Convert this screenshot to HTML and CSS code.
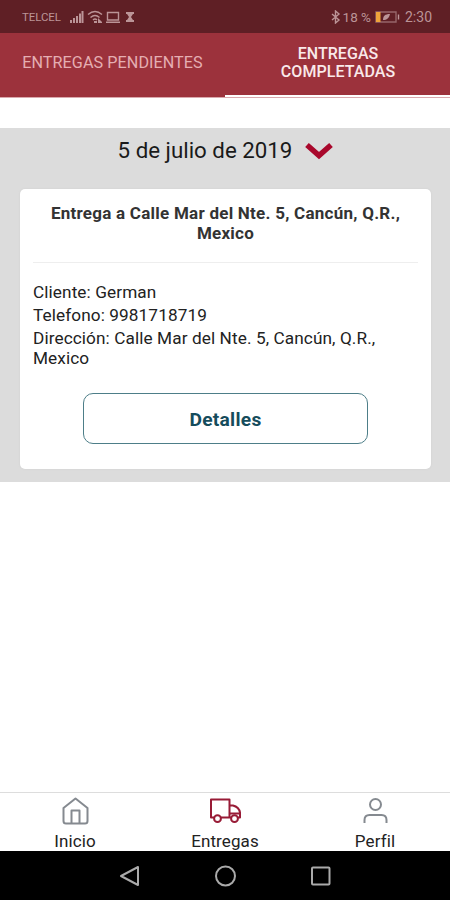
FILE: index.html
```html
<!DOCTYPE html>
<html lang="es">
<head>
<meta charset="utf-8">
<title>Entregas</title>
<link rel="stylesheet" href="styles.css">
</head>
<body>
<div class="app">
  <header class="status">
    <span class="carrier">TELCEL</span>
    <svg class="status-left" width="68" height="16" viewBox="0 0 68 16">
      <path class="fill" d="M1 11h2v3H1zM4 9h2v5H4zM7 7h2v7H7zM10 4.500h2V14h-2zM12.500 2h2v12h-2z"/>
      <path class="line" d="M19 5.500q7-6 14 0M21.500 8.500q4.500-4 9 0M24 11q2-2 4 0"/>
      <path class="fill" d="M25 12h3v2h-3zM29 9l4 4h-4zM29 14h4v-1h-4z"/>
      <path class="line" d="M38.500 3.500h11v7.500h-11zM37 13.300h14"/>
      <path class="fill" d="M57 3h8v2h-1l-2 3 2 3h1v2h-8v-2h1l2-3-2-3h-1z"/>
    </svg>
    <span class="spacer"></span>
    <svg class="bluetooth" width="10" height="14" viewBox="0 0 10 14"><path class="line" d="M1 4l7 6-3.500 3V1L8 4l-7 6"/></svg>
    <span class="percent">18 %</span>
    <svg class="battery" width="26" height="12" viewBox="0 0 26 12">
      <path class="frame" d="M1 1h20v10H1z"/>
      <path class="line" d="M23.500 3.500v5"/>
      <path class="charge" d="M1 1h4.500v10H1z"/>
      <path class="fill" d="M8 9c0-4 2-6 7-6-1 4-3 6-7 6z"/>
    </svg>
    <span class="clock">2:30</span>
  </header>
  <nav class="tabs">
    <div class="tab">ENTREGAS PENDIENTES</div>
    <div class="tab active">ENTREGAS<br>COMPLETADAS</div>
  </nav>
  <main class="content">
    <section class="day">
      <div class="date"><span>5 de julio de 2019</span>
        <svg width="28" height="18" viewBox="0 0 28 18"><path class="chevron" d="M2 3L14 13.500L26 3"/></svg>
      </div>
      <article class="card">
        <h2>Entrega a Calle Mar del Nte. 5, Cancún, Q.R.,<br>Mexico</h2>
        <div class="details">
          <p>Cliente: German</p>
          <p>Telefono: 9981718719</p>
          <p>Dirección: Calle Mar del Nte. 5, Cancún, Q.R.,<br>Mexico</p>
        </div>
        <button class="button">Detalles</button>
      </article>
    </section>
  </main>
  <nav class="bottom">
    <div class="item">
      <svg width="32" height="32" viewBox="0 0 32 32"><path d="M4.500 13L16.500 3.500L28.500 13V26q0 2.500-2.500 2.500H7Q4.500 28.500 4.500 26zM12.500 28V15.500h8v12.500"/></svg>
      <span>Inicio</span>
    </div>
    <div class="item selected">
      <svg width="32" height="32" viewBox="0 0 32 32"><path d="M5 22.500H2V4.500h18.500v18H12M20.500 10.500h3.500q6 1.500 7 7v5h-2M20.500 18.500h10.500M20.500 22.500h2"/><circle cx="8.500" cy="23.700" r="3.400"/><circle cx="25.500" cy="23.700" r="3.400"/></svg>
      <span>Entregas</span>
    </div>
    <div class="item">
      <svg width="32" height="32" viewBox="0 0 32 32"><circle cx="16.500" cy="9.500" r="5.500"/><path d="M5.500 28v-3q0-5 5-5h12q5 0 5 5v3"/></svg>
      <span>Perfil</span>
    </div>
  </nav>
  <footer class="system">
    <svg width="24" height="24" viewBox="0 0 24 24"><path d="M21 3v18L4 12z"/></svg>
    <svg width="24" height="24" viewBox="0 0 24 24"><circle cx="12.500" cy="12" r="9.500"/></svg>
    <svg width="24" height="24" viewBox="0 0 24 24"><rect x="3" y="3.500" width="17.500" height="17" rx="1"/></svg>
  </footer>
</div>
</body>
</html>
```
FILE: styles.css
```css
* { box-sizing: border-box; }
body { margin: 0; font-family: Roboto, "Liberation Sans", sans-serif; color: #222; background: #fff; }
.app { width: 450px; height: 900px; display: flex; flex-direction: column; overflow: hidden; }
svg { display: block; flex: none; fill: none; }
.status { height: 33px; flex: none; display: flex; align-items: center; padding: 0 18px 0 22px; background: #5f1f25; color: #bb9497; }
.carrier { width: 40px; font-size: 11.500px; letter-spacing: -0.1px; }
.status-left { margin-left: 7px; }
.spacer { flex: 1; }
.fill { fill: #bb9497; }
.line { stroke: #bb9497; stroke-width: 1.4; }
.frame { stroke: #96666a; stroke-width: 1.4; }
.charge { fill: #f0a43a; }
.percent { margin-left: 2px; font-size: 13.500px; white-space: nowrap; }
.battery { margin: 0 4px; }
.clock { font-size: 14px; }
.tabs { height: 65px; flex: none; display: flex; background: #9c323c; border-bottom: 1px solid #d9a9ad; }
.tab { width: 225px; display: flex; align-items: center; justify-content: center; text-align: center; padding-bottom: 5px; font-size: 16.200px; line-height: 18px; letter-spacing: 0.05px; color: #e5aeb2; }
.tab.active { color: #f9e9ea; font-weight: 500; font-size: 16px; padding: 0 0 3px 1px; border-bottom: 2px solid #fff; }
.content { flex: 1; padding-top: 30px; }
.day { height: 354px; padding: 0 19px 0 20px; background: #dcdcdc; }
.date { height: 61px; display: flex; justify-content: center; padding-top: 9px; gap: 13px; font-size: 22.300px; line-height: 26px; color: #1a1a1a; }
.date svg { margin-top: 5px; }
.chevron { stroke: #a9082c; stroke-width: 5.500; }
.card { height: 280px; padding: 14px 13px; background: #fff; border-radius: 5px; display: flex; flex-direction: column; box-shadow: 0 0 2px #ccc; }
h2 { margin: 0; height: 60px; flex: none; border-bottom: 1px solid #eee; text-align: center; font-size: 17px; line-height: 20px; font-weight: 700; letter-spacing: 0.25px; color: #333; white-space: nowrap; }
.details { padding-top: 19px; font-size: 17.200px; line-height: 20px; letter-spacing: 0.1px; white-space: nowrap; }
p { margin: 0 0 3px; }
.button { width: 285px; height: 51px; flex: none; margin: 22px auto 0; padding: 2px 0 0; border: 1.500px solid #4d7e88; border-radius: 10px; background: #fff; color: #154c5c; font: 700 19.200px Roboto, sans-serif; letter-spacing: 0.25px; }
.bottom { height: 59px; flex: none; display: flex; border-top: 1px solid #ddd; background: #fff; }
.item { flex: 1; display: flex; flex-direction: column; align-items: center; padding-top: 2px; font-size: 17px; line-height: 20px; letter-spacing: 0.1px; color: #222; }
.item svg { stroke: #858a90; stroke-width: 2; stroke-linejoin: round; }
.item span { margin-top: 4px; }
.selected svg { stroke: #981b36; }
.system { height: 49px; flex: none; display: flex; align-items: center; justify-content: center; gap: 72px; background: #000; }
.system svg { stroke: #aaa; stroke-width: 2; stroke-linejoin: round; }
```
